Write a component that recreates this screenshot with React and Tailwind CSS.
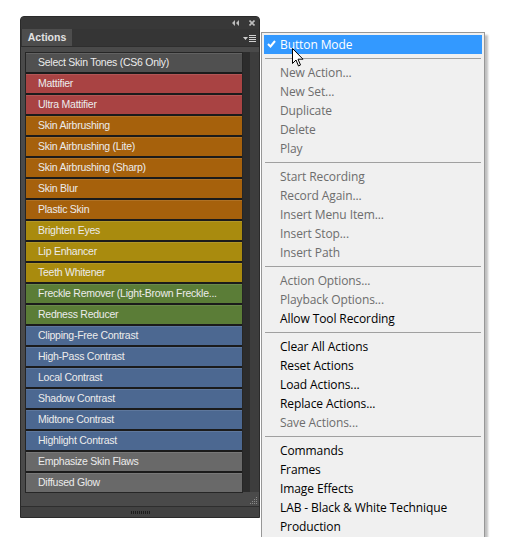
import React from 'react';

const ROWS = [
    { label: 'Select Skin Tones (CS6 Only)', color: 'bg-[#505050]' },
    { label: 'Mattifier', color: 'bg-[#a94343]' },
    { label: 'Ultra Mattifier', color: 'bg-[#a94343]' },
    { label: 'Skin Airbrushing', color: 'bg-[#a6610c]' },
    { label: 'Skin Airbrushing (Lite)', color: 'bg-[#a6610c]' },
    { label: 'Skin Airbrushing (Sharp)', color: 'bg-[#a6610c]' },
    { label: 'Skin Blur', color: 'bg-[#a6610c]' },
    { label: 'Plastic Skin', color: 'bg-[#a6610c]' },
    { label: 'Brighten Eyes', color: 'bg-[#a98b0e]' },
    { label: 'Lip Enhancer', color: 'bg-[#a98b0e]' },
    { label: 'Teeth Whitener', color: 'bg-[#a98b0e]' },
    { label: 'Freckle Remover (Light-Brown Freckle...', color: 'bg-[#5b7d37]' },
    { label: 'Redness Reducer', color: 'bg-[#5b7d37]' },
    { label: 'Clipping-Free Contrast', color: 'bg-[#4c6891]' },
    { label: 'High-Pass Contrast', color: 'bg-[#4c6891]' },
    { label: 'Local Contrast', color: 'bg-[#4c6891]' },
    { label: 'Shadow Contrast', color: 'bg-[#4c6891]' },
    { label: 'Midtone Contrast', color: 'bg-[#4c6891]' },
    { label: 'Highlight Contrast', color: 'bg-[#4c6891]' },
    { label: 'Emphasize Skin Flaws', color: 'bg-[#696969]' },
    { label: 'Diffused Glow', color: 'bg-[#696969]' },
];

// groups of the flyout menu, a separator goes before each group
const MENU = [
    [{ label: 'New Action...', off: true }, { label: 'New Set...', off: true }, { label: 'Duplicate', off: true }, { label: 'Delete', off: true }, { label: 'Play', off: true }],
    [{ label: 'Start Recording', off: true }, { label: 'Record Again...', off: true }, { label: 'Insert Menu Item...', off: true }, { label: 'Insert Stop...', off: true }, { label: 'Insert Path', off: true }],
    [{ label: 'Action Options...', off: true }, { label: 'Playback Options...', off: true }, { label: 'Allow Tool Recording' }],
    [{ label: 'Clear All Actions' }, { label: 'Reset Actions' }, { label: 'Load Actions...' }, { label: 'Replace Actions...' }, { label: 'Save Actions...', off: true }],
    [{ label: 'Commands' }, { label: 'Frames' }, { label: 'Image Effects' }, { label: 'LAB - Black & White Technique' }, { label: 'Production' }],
];

function ActionsPanel() {
    return (
        <div className="w-[240px] h-[502px] bg-[#4a4a4a] rounded-t-[4px] flex flex-col border border-[#2a2a2a] overflow-hidden">
            {/* Title bar */}
            <div className="h-[12px] bg-[#383838] flex items-center justify-end gap-[10px] pr-[4px] shrink-0">
                <svg width="7" height="6" viewBox="0 0 7 6" className="text-[#bdbdbd]">
                    <path d="M3 0 L0 3 L3 6 Z M7 0 L4 3 L7 6 Z" fill="currentColor" />
                </svg>
                <svg width="6" height="6" viewBox="0 0 6 6" className="text-[#bdbdbd]">
                    <path d="M0.5 0.5 L5.5 5.5 M5.5 0.5 L0.5 5.5" stroke="currentColor" strokeWidth="1.6" />
                </svg>
            </div>

            {/* Tab row */}
            <div className="h-[18px] bg-[#353535] flex items-end justify-between shrink-0 border-b border-[#2e2e2e]">
                <div className="h-[17px] w-[50px] ml-[1px] bg-[#4d4d4d] flex items-center justify-center text-[10.5px] text-[#e2e2e2] font-bold">
                    Actions
                </div>
                <div className="flex items-center gap-[1px] mr-[3px] mb-[4px]">
                    <svg width="5" height="3" viewBox="0 0 5 3"><path d="M0 0 H5 L2.5 3 Z" fill="#d0d0d0" /></svg>
                    <div className="flex flex-col gap-[1px]">
                        <div className="w-[7px] h-[1px] bg-[#d0d0d0]" />
                        <div className="w-[7px] h-[1px] bg-[#d0d0d0]" />
                        <div className="w-[7px] h-[1px] bg-[#d0d0d0]" />
                        <div className="w-[7px] h-[1px] bg-[#d0d0d0]" />
                    </div>
                </div>
            </div>

            {/* Body */}
            <div className="flex flex-1 pt-[5px] pl-[4px]">
                <div className="w-[218px] bg-[#1b1b1b] border border-[#262626] flex flex-col gap-[2px] self-start">
                    {ROWS.map((row) => (
                        <div
                            key={row.label}
                            className={`${row.color} h-[19px] flex items-center pl-[12px] text-[10.5px] tracking-[-0.25px] text-[#ececec] whitespace-nowrap overflow-hidden border-t border-white/10`}
                        >
                            {row.label}
                        </div>
                    ))}
                </div>
                <div className="flex flex-col flex-1">
                    <div className="h-[440px] bg-[#3d3d3d] border-l-[7px] border-[#2c2c2c]" />
                    <div className="flex-1 flex items-end justify-end pr-[2px] pb-[2px]">
                        <svg width="7" height="7" viewBox="0 0 7 7">
                            <g fill="#8a8a8a">
                                <rect x="6" y="0" width="1" height="1" />
                                <rect x="4" y="2" width="1" height="1" />
                                <rect x="6" y="2" width="1" height="1" />
                                <rect x="2" y="4" width="1" height="1" />
                                <rect x="4" y="4" width="1" height="1" />
                                <rect x="6" y="4" width="1" height="1" />
                                <rect x="0" y="6" width="1" height="1" />
                                <rect x="2" y="6" width="1" height="1" />
                                <rect x="4" y="6" width="1" height="1" />
                                <rect x="6" y="6" width="1" height="1" />
                            </g>
                        </svg>
                    </div>
                </div>
            </div>

            {/* Bottom grip bar */}
            <div className="h-[11px] bg-[#424242] border-t border-[#2e2e2e] flex items-center justify-center shrink-0">
                <div className="flex gap-[1px]">
                    {Array.from({ length: 10 }).map((_, i) => (
                        <div key={i} className="w-[1px] h-[3px] bg-[#1e1e1e]" />
                    ))}
                </div>
            </div>
        </div>
    );
}

function FlyoutMenu() {
    return (
        <div className="absolute left-[261px] top-[32px] w-[224px] bg-[#f0f0f0] border border-[#979797] shadow-[3px_3px_2px_rgba(0,0,0,0.25)] px-[2px] pt-[2px] pb-[20px] text-[12px] font-['Open_Sans','Noto_Sans',sans-serif]">
            <div className="h-[19px] bg-[#3399ff] text-white flex items-center relative">
                <svg width="9" height="8" viewBox="0 0 9 8" className="absolute left-[3px] top-[5px]">
                    <path d="M1 4 L3.5 6.5 L8 1" stroke="white" strokeWidth="2" fill="none" />
                </svg>
                <span className="pl-[16px] tracking-[-0.1px]">Button Mode</span>
            </div>
            {MENU.map((group, gi) => (
                <div key={gi}>
                    <div className="h-[1px] bg-[#a0a0a0] mx-[1px] my-[4px]" />
                    <div className="flex flex-col">
                        {group.map((item) => (
                            <div
                                key={item.label}
                                className={`h-[19px] flex items-center pl-[16px] tracking-[-0.1px] ${item.off ? 'text-[#6d6d6d]' : 'text-black'}`}
                            >
                                {item.label}
                            </div>
                        ))}
                    </div>
                </div>
            ))}
        </div>
    );
}

export default function App() {
    return (
        <div className="relative w-[509px] h-[537px] bg-white overflow-hidden font-['Liberation_Sans','DejaVu_Sans',sans-serif]">
            <div className="pt-[16px] pl-[20px]">
                <ActionsPanel />
            </div>
            <FlyoutMenu />
            {/* mouse cursor */}
            <svg width="12" height="19" viewBox="0 0 12 19" className="absolute left-[292px] top-[48px]">
                <path d="M0.5 0.5 L0.5 15.5 L4 12 L6.5 18 L8.5 17 L6 11.2 L11 11.2 Z" fill="white" stroke="black" strokeWidth="1" strokeLinejoin="round" />
            </svg>
        </div>
    );
}
